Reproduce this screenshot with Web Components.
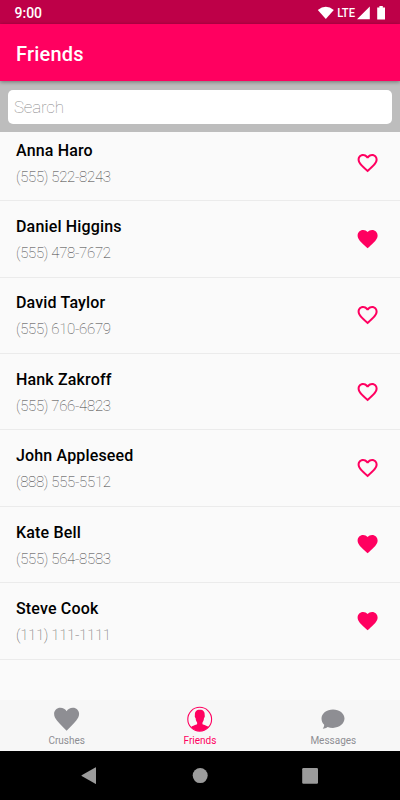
<!DOCTYPE html>
<html lang="en">
<head>
<meta charset="utf-8">
<title>Friends</title>
<style>
body { margin: 0; font-family: Roboto, "Liberation Sans", sans-serif; }
</style>
</head>
<body>
<friends-app></friends-app>
<script>
const define = (name, html) => customElements.define(name, class extends HTMLElement {
  constructor() {
    super();
    this.attachShadow({ mode: 'open' }).innerHTML = html;
  }
});

define('status-bar', `<style>
:host { display: flex; box-sizing: border-box; height: 24px; padding: 1px 13px 0 14.5px; align-items: center; justify-content: space-between; background: #be0048; color: #fff; font-size: 14px; font-weight: 500; line-height: 24px; }
svg { display: block; }
</style>
<span><slot></slot></span>
<svg width="70" height="16" viewBox="317 4 70 16" fill="#fff">
<path d="M317.8 8.9Q325.8 2.7 333.8 8.9L325.8 17.9Z"/>
<text x="337.2" y="16.2" font-size="12" font-weight="500" textLength="17.8" lengthAdjust="spacingAndGlyphs">LTE</text>
<path d="M357 18.2L369.8 5.4V18.2ZM377.2 6.5H379.4V5H382.8V6.5H385V18.4H377.2Z"/>
</svg>`);

define('app-header', `<style>
:host { display: flex; box-sizing: border-box; position: relative; z-index: 1; height: 57px; padding: 2px 16px 0; align-items: center; background: #ff0060; color: #fff; box-shadow: 0 1px 4px rgba(0,0,0,.4); font-size: 20px; font-weight: 500; letter-spacing: .2px; }
</style><slot></slot>`);

define('search-field', `<style>
:host { display: block; box-sizing: border-box; height: 51px; padding: 8.5px 8px; background: #bdbdbd; }
div { box-sizing: border-box; height: 34.5px; padding-left: 6px; border-radius: 5px; background: #fff; color: #888; font-size: 17px; font-weight: 100; line-height: 35px; letter-spacing: -.2px; }
</style><div><slot></slot></div>`);

customElements.define('friend-row', class extends HTMLElement {
  constructor() {
    super();
    const liked = this.hasAttribute('liked');
    const outline = 'M16.5 3c-1.74 0-3.41.81-4.5 2.09C10.91 3.81 9.24 3 7.5 3 4.42 3 2 5.42 2 8.5c0 3.78 3.4 6.86 8.55 11.54L12 21.35l1.45-1.32C18.6 15.36 22 12.28 22 8.5 22 5.42 19.58 3 16.5 3zm-4.4 15.55l-.1.1-.1-.1C7.14 14.24 4 11.39 4 8.5 4 6.5 5.5 5 7.5 5c1.54 0 3.04.99 3.57 2.36h1.87C13.46 5.99 14.96 5 16.5 5c2 0 3.5 1.5 3.5 3.5 0 2.89-3.14 5.74-7.9 10.05z';
    const solid = 'M12 21.35l-1.45-1.32C5.4 15.36 2 12.28 2 8.5 2 5.42 4.42 3 7.5 3c1.74 0 3.41.81 4.5 2.09C13.09 3.81 14.76 3 16.5 3 19.58 3 22 5.42 22 8.5c0 3.78-3.4 6.86-8.55 11.54L12 21.35z';
    this.attachShadow({ mode: 'open' }).innerHTML = `<style>
:host { display: flex; box-sizing: border-box; height: 76.4px; padding: 0 20.5px 0 16px; align-items: center; justify-content: space-between; border-bottom: 1px solid #ebebeb; }
.text { padding-top: 2.2px; }
.name { color: #000; font-size: 16px; font-weight: 500; line-height: 26px; letter-spacing: .16px; }
.phone { color: #444; font-size: 15px; font-weight: 100; line-height: 26px; letter-spacing: -.32px; }
svg { display: block; fill: #ff0060; }
</style>
<div class="text"><div class="name"><slot></slot></div><div class="phone"><slot name="phone"></slot></div></div>
<svg width="24" height="24" viewBox="0 0 24 24"><path transform="translate(-.4 0)" d="${liked ? solid : outline}"/></svg>`;
  }
});

define('friend-list', `<style>
:host { display: block; flex: 1; min-height: 0; overflow: hidden; background: #fafafa; }
div { margin-top: -7.2px; }
</style><div><slot></slot></div>`);

define('tab-item', `<style>
:host { display: flex; flex: 1; flex-direction: column; align-items: center; padding-top: 6px; color: #8e8e93; font-size: 10px; line-height: 14px; }
:host([active]) { color: #ff0060; }
span { margin-top: 1.5px; }
</style><slot name="icon"></slot><span><slot></slot></span>`);

define('tab-bar', `<style>
:host { display: flex; height: 51px; background: #f7f7f7; }
</style><slot></slot>`);

define('system-nav', `<style>
:host { display: flex; height: 49px; justify-content: center; background: #000; }
svg { display: block; }
</style>
<svg width="400" height="49" viewBox="0 751 400 49" fill="#9b9b9b">
<path d="M95.3 767.4Q96 767 96 768V783.4Q96 784.2 95.3 783.8L81.7 776Q81.2 775.6 81.7 775.2Z"/>
<circle cx="200.2" cy="775.6" r="7.5"/><rect x="302.2" y="768" width="15.8" height="15.8" rx="1.2"/>
</svg>`);

define('friends-app', `<style>
:host { display: flex; flex-direction: column; width: 400px; height: 800px; overflow: hidden; background: #fafafa; }
svg { display: block; fill: currentColor; }
</style>
<status-bar>9:00</status-bar>
<app-header>Friends</app-header>
<search-field>Search</search-field>
<friend-list>
<friend-row>Anna Haro<span slot="phone">(555) 522-8243</span></friend-row>
<friend-row liked>Daniel Higgins<span slot="phone">(555) 478-7672</span></friend-row>
<friend-row>David Taylor<span slot="phone">(555) 610-6679</span></friend-row>
<friend-row>Hank Zakroff<span slot="phone">(555) 766-4823</span></friend-row>
<friend-row>John Appleseed<span slot="phone">(888) 555-5512</span></friend-row>
<friend-row liked>Kate Bell<span slot="phone">(555) 564-8583</span></friend-row>
<friend-row liked>Steve Cook<span slot="phone">(111) 111-1111</span></friend-row>
</friend-list>
<tab-bar>
<tab-item>
<svg slot="icon" width="26" height="26" viewBox=".4 0 26 26"><path d="M13 24.7C10.8 22.2 6.5 18.3 3.5 14.7C1.8 12.6.5 10.5.5 7.8C.5 4.3 3.3 1.7 6.7 1.7C9.5 1.7 11.8 3 13 5.2C14.2 3 16.5 1.7 19.3 1.7C22.7 1.7 25.5 4.3 25.5 7.8C25.5 10.5 24.2 12.6 22.5 14.7C19.5 18.3 15.2 22.2 13 24.7Z"/></svg>Crushes</tab-item>
<tab-item active>
<svg slot="icon" width="26" height="26" viewBox="0 0 26 26"><circle cx="12.7" cy="13.2" r="11.9" fill="none" stroke="currentColor" stroke-width="1.1"/><path d="M4 21.3C5 20 7.5 19.4 9.6 18.6C10.4 18.2 10.2 17.2 10 16.2C9 15 8.7 13.5 8.6 12C7.8 11.6 7.6 10.2 7.9 9.2C7.7 5.8 9.2 3.8 12.8 3.8S17.8 5.8 17.7 9.2C18 10.2 17.8 11.6 17 12C16.9 13.5 16.6 15 15.6 16.2C15.4 17.2 15.2 18.2 16 18.6C18.1 19.4 20.6 20 21.6 21.3Q18 25 12.8 25T4 21.3Z"/></svg>Friends</tab-item>
<tab-item>
<svg slot="icon" width="26" height="26" viewBox="0 0 26 26"><path d="M13 3.6C19.3 3.6 24.5 7.5 24.5 12.6S19.3 21.9 13 21.9C11 21.9 9.2 21.6 7.6 21C6.3 22 4.4 22.7 2.8 22.8C3.5 21.7 4.2 20.3 4.2 18.8C2.5 17.2 1.5 15 1.5 12.6C1.5 7.5 6.7 3.6 13 3.6Z"/></svg>Messages</tab-item>
</tab-bar>
<system-nav></system-nav>`);
</script>
</body>
</html>
